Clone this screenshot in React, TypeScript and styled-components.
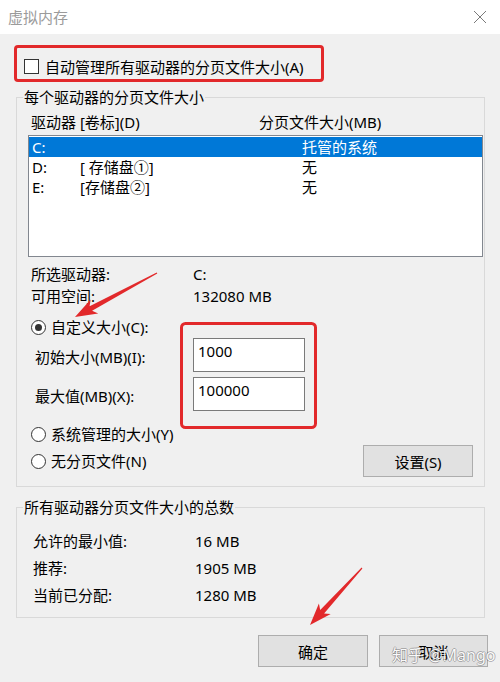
import styled, { createGlobalStyle } from 'styled-components';

const GlobalStyle = createGlobalStyle`
  html, body {
    margin: 0;
    padding: 0;
    background: #f0f0f0;
  }
  body {
    font-family: "Noto Sans", "Noto Sans CJK SC", sans-serif;
    font-size: 15px;
    color: #000;
  }
`;

const Window = styled.div`
  position: relative;
  width: 500px;
  height: 682px;
  background: #f0f0f0;
  overflow: hidden;
`;

const TitleBar = styled.div`
  height: 34px;
  background: #fff;
  display: flex;
  align-items: center;
  justify-content: space-between;
  padding: 0 13px 0 8px;
`;

const Title = styled.span`
  color: #9b9b9b;
  font-size: 15px;
  line-height: 20px;
`;

const AutoBox = styled.div`
  margin: 11px 0 0 14px;
  width: 310px;
  height: 37px;
  box-sizing: border-box;
  border: 3px solid #e2292b;
  border-radius: 4px;
  padding: 6px 0 0 7px;
  display: flex;
  align-items: center;
  gap: 6px;
  line-height: 20px;
`;

const CheckBox = styled.span`
  flex: none;
  width: 15px;
  height: 15px;
  box-sizing: border-box;
  border: 1px solid #333;
  background: #fff;
`;

const Group = styled.fieldset<{ $top: number }>`
  margin: ${(p) => p.$top}px 0 0 16px;
  width: 469px;
  box-sizing: border-box;
  padding: 0 1px 9px 6px;
  border: 1px solid #d9d9d9;
  min-inline-size: 0;
`;

const Legend = styled.legend`
  padding: 0 1px;
  line-height: 20px;
  font-size: 15px;
`;

const Inner = styled.div`
  margin-left: 5px;
`;

const HeaderRow = styled.div`
  margin-top: 5px;
  display: grid;
  grid-template-columns: 228px 1fr;
  padding-left: 3px;
  line-height: 20px;
`;

const DriveList = styled.div`
  margin-top: 3px;
  height: 122px;
  box-sizing: border-box;
  border: 1px solid #82878f;
  background: #fff;
  padding-top: 1px;
`;

const DriveRow = styled.div<{ $selected?: boolean }>`
  display: grid;
  grid-template-columns: 48px 222px 1fr;
  padding-left: 3px;
  height: 20px;
  line-height: 20px;
  background: ${(p) => (p.$selected ? '#0078d7' : 'transparent')};
  color: ${(p) => (p.$selected ? '#fff' : '#000')};
`;

const InfoRow = styled.div<{ $indent: number; $height: number }>`
  display: grid;
  grid-template-columns: 162px 1fr;
  padding-left: ${(p) => p.$indent}px;
  height: ${(p) => p.$height}px;
  align-items: center;
  line-height: 20px;
`;

const InfoBlock = styled.div<{ $top: number }>`
  margin-top: ${(p) => p.$top}px;
`;

const RadioRow = styled.div<{ $top?: number; $height?: number }>`
  margin-top: ${(p) => p.$top ?? 0}px;
  height: ${(p) => p.$height ?? 22}px;
  display: flex;
  align-items: center;
  padding-left: 3px;
  gap: 5px;
  line-height: 20px;
`;

const Radio = styled.span<{ $checked?: boolean }>`
  width: 15px;
  height: 15px;
  box-sizing: border-box;
  border: 1px solid #333;
  border-radius: 50%;
  background: #fff;
  display: flex;
  align-items: center;
  justify-content: center;
  &::after {
    content: '';
    width: 7px;
    height: 7px;
    border-radius: 50%;
    background: ${(p) => (p.$checked ? '#333' : 'transparent')};
  }
`;

const SizeRow = styled.div<{ $top?: number }>`
  margin-top: ${(p) => p.$top ?? 0}px;
  display: grid;
  grid-template-columns: 158px 112px;
  padding-left: 7px;
  align-items: center;
  line-height: 20px;
`;

const SizeLabel = styled.span`
  padding-top: 3px;
`;

const SizeInput = styled.input`
  width: 112px;
  height: 34px;
  box-sizing: border-box;
  border: 1px solid #7a7a7a;
  background: #fff;
  padding: 2px 4px 10px;
  font: inherit;
  font-size: 15px;
  color: #000;
  outline: none;
`;

const SpacedRow = styled.div`
  display: flex;
  align-items: center;
  justify-content: space-between;
  height: 32px;
  padding-right: 10px;
`;

const Button = styled.button<{ $width: number }>`
  width: ${(p) => p.$width}px;
  height: 32px;
  box-sizing: border-box;
  border: 1px solid #adadad;
  background: #e1e1e1;
  font: inherit;
  font-size: 15px;
  color: #000;
  padding: 0;
`;

const Footer = styled.div`
  margin-top: 17px;
  display: flex;
  justify-content: flex-end;
  gap: 11px;
  padding-right: 12px;
`;

// site watermark stamped over the lower right corner
const Watermark = styled.span`
  position: absolute;
  left: 392px;
  top: 644px;
  font-size: 16px;
  line-height: 22px;
  color: #fff;
  opacity: 0.85;
  text-shadow:
    1px 0 0 rgba(0, 0, 0, 0.28),
    -1px 0 0 rgba(0, 0, 0, 0.28),
    0 1px 0 rgba(0, 0, 0, 0.28),
    0 -1px 0 rgba(0, 0, 0, 0.28);
  pointer-events: none;
  white-space: nowrap;
`;

const Markup = styled.svg`
  position: absolute;
  inset: 0;
  pointer-events: none;
`;

// tapered red arrow from tail to tip
function arrowPoints(x1: number, y1: number, x2: number, y2: number) {
  const dx = x2 - x1;
  const dy = y2 - y1;
  const len = Math.hypot(dx, dy);
  const ux = dx / len;
  const uy = dy / len;
  const nx = -uy;
  const ny = ux;
  const head = 22;
  const half = 8;
  const bx = x2 - ux * head;
  const by = y2 - uy * head;
  const nbx = x2 - ux * (head - 4);
  const nby = y2 - uy * (head - 4);
  const pts: [number, number][] = [
    [x1 + nx * 0.6, y1 + ny * 0.6],
    [nbx + nx * 2.6, nby + ny * 2.6],
    [bx + nx * half, by + ny * half],
    [x2, y2],
    [bx - nx * half, by - ny * half],
    [nbx - nx * 2.6, nby - ny * 2.6],
    [x1 - nx * 0.6, y1 - ny * 0.6],
  ];
  return pts.map(([x, y]) => `${x.toFixed(1)},${y.toFixed(1)}`).join(' ');
}

export default function App() {
  return (
    <Window>
      <GlobalStyle />
      <TitleBar>
        <Title>虚拟内存</Title>
        <svg width="14" height="14" viewBox="0 0 14 14">
          <path d="M1 1 L13 13 M13 1 L1 13" stroke="#7a7a7a" strokeWidth="1" />
        </svg>
      </TitleBar>

      <AutoBox>
        <CheckBox />
        <span>自动管理所有驱动器的分页文件大小(A)</span>
      </AutoBox>

      <Group $top={5}>
        <Legend>每个驱动器的分页文件大小</Legend>
        <Inner>
          <HeaderRow>
            <span>驱动器 [卷标](D)</span>
            <span>分页文件大小(MB)</span>
          </HeaderRow>
          <DriveList>
            <DriveRow $selected>
              <span>C:</span>
              <span></span>
              <span>托管的系统</span>
            </DriveRow>
            <DriveRow>
              <span>D:</span>
              <span>[ 存储盘①]</span>
              <span>无</span>
            </DriveRow>
            <DriveRow>
              <span>E:</span>
              <span>[存储盘②]</span>
              <span>无</span>
            </DriveRow>
          </DriveList>

          <InfoBlock $top={6}>
            <InfoRow $indent={3} $height={22}>
              <span>所选驱动器:</span>
              <span>C:</span>
            </InfoRow>
            <InfoRow $indent={3} $height={22}>
              <span>可用空间:</span>
              <span>132080 MB</span>
            </InfoRow>
          </InfoBlock>

          <RadioRow $top={9}>
            <Radio $checked />
            <span>自定义大小(C):</span>
          </RadioRow>
          <SizeRow>
            <SizeLabel>初始大小(MB)(I):</SizeLabel>
            <SizeInput value="1000" readOnly />
          </SizeRow>
          <SizeRow $top={5}>
            <SizeLabel>最大值(MB)(X):</SizeLabel>
            <SizeInput value="100000" readOnly />
          </SizeRow>

          <RadioRow $top={12}>
            <Radio />
            <span>系统管理的大小(Y)</span>
          </RadioRow>
          <SpacedRow>
            <RadioRow $height={32}>
              <Radio />
              <span>无分页文件(N)</span>
            </RadioRow>
            <Button $width={110}>设置(S)</Button>
          </SpacedRow>
        </Inner>
      </Group>

      <Group $top={10}>
        <Legend>所有驱动器分页文件大小的总数</Legend>
        <Inner>
          <InfoBlock $top={10}>
            <InfoRow $indent={5} $height={27}>
              <span>允许的最小值:</span>
              <span>16 MB</span>
            </InfoRow>
            <InfoRow $indent={5} $height={27}>
              <span>推荐:</span>
              <span>1905 MB</span>
            </InfoRow>
            <InfoRow $indent={5} $height={27}>
              <span>当前已分配:</span>
              <span>1280 MB</span>
            </InfoRow>
          </InfoBlock>
        </Inner>
      </Group>

      <Footer>
        <Button $width={110}>确定</Button>
        <Button $width={109}>取消</Button>
      </Footer>

      <Watermark>知乎 @Mango</Watermark>

      <Markup width="500" height="682" viewBox="0 0 500 682">
        <rect x="181.5" y="323.5" width="134" height="104" rx="4" fill="none" stroke="#e2292b" strokeWidth="3" />
        <polygon points={arrowPoints(157, 273, 75, 317)} fill="#e2292b" />
        <polygon points={arrowPoints(362, 568, 310, 625)} fill="#e2292b" />
      </Markup>
    </Window>
  );
}
